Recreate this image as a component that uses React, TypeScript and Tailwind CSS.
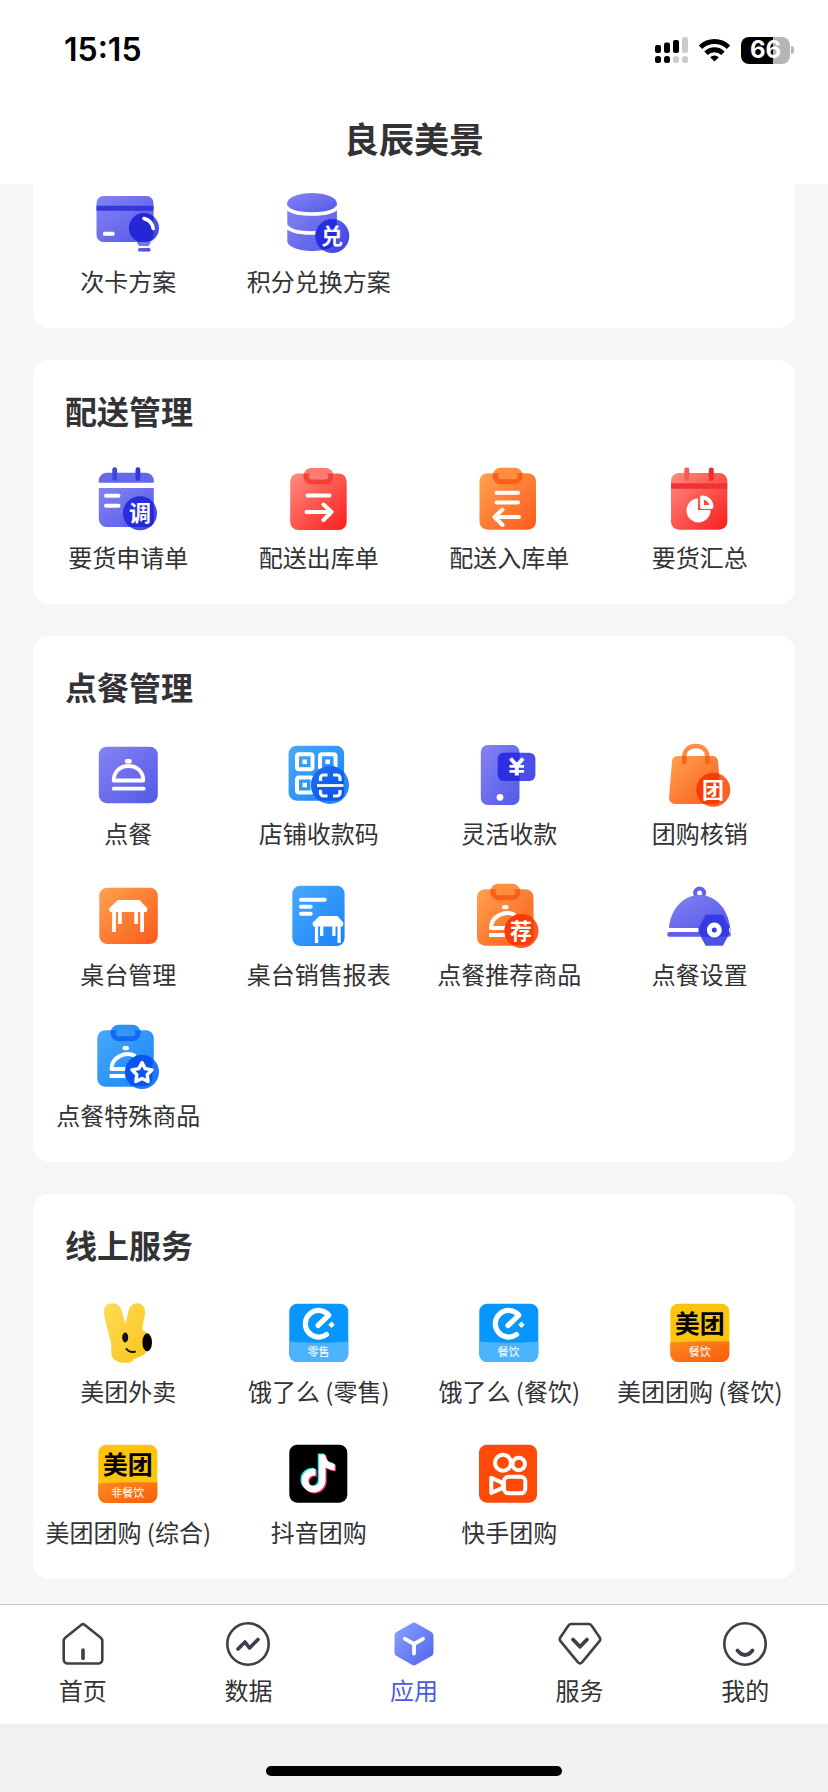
import type { ReactNode } from "react";

type AppItem = {
  name: string;
  icon: ReactNode;
};

type TabItem = {
  name: string;
  icon: ReactNode;
  active?: boolean;
};

function Icon({ children }: { children: ReactNode }) {
  return (
    <svg width="64" height="64" viewBox="0 0 64 64" className="overflow-visible" aria-hidden="true">
      {children}
    </svg>
  );
}

// Shared gradients, referenced by id from every icon
function Gradients() {
  const stops = [
    ["purple", "#8583f3", "#5359e8"],
    ["indigo", "#6a6cf0", "#3a40e2"],
    ["deep", "#2b2fe6", "#2226cf"],
    ["red", "#ff8d80", "#fb1d1d"],
    ["orange", "#ffa24f", "#fb5a1c"],
    ["blue", "#47aafa", "#1a82f8"],
    ["blueDeep", "#1b74f5", "#0a4be6"],
    ["tab", "#8ba2fd", "#4f62f0"],
    ["strip", "#fb8a1e", "#fb5b0e"],
    ["rabbit", "#fbdc55", "#fcc419"],
  ];
  return (
    <svg width="0" height="0" className="absolute" aria-hidden="true">
      <defs>
        {stops.map(([id, from, to]) => (
          <linearGradient key={id} id={id} x1="0" y1="0" x2="1" y2="1">
            <stop offset="0" stopColor={from} />
            <stop offset="1" stopColor={to} />
          </linearGradient>
        ))}
      </defs>
    </svg>
  );
}

function BadgeText({ x, y, children }: { x: number; y: number; children: string }) {
  return (
    <text x={x} y={y} textAnchor="middle" className="fill-white text-[22px] font-bold">
      {children}
    </text>
  );
}

type ClipboardProps = {
  id: string;
  x: number;
  y: number;
  fill: string;
  light: string;
  dark: string;
  inner: string;
};

// Board with a clip on top, the clip is darker where it covers the board
function Clipboard({ id, x, y, fill, light, dark, inner }: ClipboardProps) {
  return (
    <g transform={`translate(${x} ${y})`}>
      <clipPath id={id}>
        <rect x="0" y="5.500" width="56.500" height="56.500" rx="8" />
      </clipPath>
      <rect x="0" y="5.500" width="56.500" height="56.500" rx="8" fill={fill} />
      <rect x="13.300" y="0" width="30" height="16.500" rx="8" fill={light} />
      <rect x="13.300" y="0" width="30" height="16.500" rx="8" fill={dark} clipPath={`url(#${id})`} />
      <rect x="18.500" y="5" width="19.500" height="6.500" rx="3" fill={inner} />
    </g>
  );
}

function PlanCardIcon() {
  return (
    <Icon>
      <clipPath id="planCard">
        <rect x="0.500" y="6" width="57" height="46" rx="7" />
      </clipPath>
      <rect x="0.500" y="6" width="57" height="46" rx="7" fill="url(#purple)" />
      <path d="M0.500 15.700h57v5h-57z" fill="#3437dc" />
      <rect x="7" y="41.700" width="11.500" height="4" rx="1.500" fill="#fff" />
      <g fill="url(#indigo)">
        <circle cx="48" cy="38" r="15" />
        <path d="M41 50h13.500v3l-2 3h-9.500l-2-3z" fill="#7476f0" />
        <rect x="42" y="58" width="12.500" height="3.500" rx="1.500" />
      </g>
      <g clipPath="url(#planCard)" fill="#2427d6">
        <circle cx="48" cy="38" r="15" />
      </g>
      <path d="M48 28.500q8 2 9.200 10" fill="none" stroke="#fff" strokeWidth="3.600" strokeLinecap="round" />
    </Icon>
  );
}

function CoinsIcon() {
  return (
    <Icon>
      <clipPath id="coins">
        <path d="M0.300 13v38c0 5.500 11 10 24.800 10s24.800-4.500 24.800-10v-38z" />
      </clipPath>
      <path d="M0.300 13v38c0 5.500 11 10 24.800 10s24.800-4.500 24.800-10v-38z" fill="url(#purple)" />
      <ellipse cx="25" cy="13" rx="24.800" ry="10" fill="url(#purple)" />
      <path
        d="M-1 16.500c3 5 13 7.500 26 7.500s23-2.500 26-7.500M-1 35.500c3 5 13 7.500 26 7.500s23-2.500 26-7.500"
        fill="none"
        stroke="#fff"
        strokeWidth="3.600"
      />
      <circle cx="45.300" cy="46" r="17" fill="url(#indigo)" />
      <circle cx="45.300" cy="46" r="17" fill="url(#deep)" clipPath="url(#coins)" />
      <BadgeText x={45} y={54}>兑</BadgeText>
    </Icon>
  );
}

function RequestIcon() {
  return (
    <Icon>
      <clipPath id="request">
        <rect x="2.800" y="6.700" width="55" height="54.300" rx="6" />
      </clipPath>
      <path d="M10.800 6.700h39a8 8 0 0 1 8 8v2h-55v-2a8 8 0 0 1 8-8z" fill="#6668ec" />
      <path d="M2.800 22h55v31a8 8 0 0 1-8 8h-39a8 8 0 0 1-8-8z" fill="url(#purple)" />
      <rect x="16.300" y="1.300" width="4.800" height="13.500" rx="2.300" fill="#4045e0" />
      <rect x="39.500" y="1.300" width="4.800" height="13.500" rx="2.300" fill="#3035de" />
      <rect x="8" y="27.700" width="16.500" height="4" rx="2" fill="#fff" />
      <rect x="8" y="37.700" width="16.500" height="4" rx="2" fill="#fff" />
      <circle cx="44" cy="47.300" r="17" fill="url(#indigo)" />
      <circle cx="44" cy="47.300" r="17" fill="url(#deep)" clipPath="url(#request)" />
      <BadgeText x={44} y={55}>调</BadgeText>
    </Icon>
  );
}

function DeliveryOutIcon() {
  return (
    <Icon>
      <Clipboard id="deliveryOut" x={3.2} y={2} fill="url(#red)" light="#fd7a70" dark="#f8403a" inner="#ff7c72" />
      <g fill="none" stroke="#fff" strokeWidth="4" strokeLinecap="round" strokeLinejoin="round">
        <path d="M20.500 29.500h22" />
        <path d="M19.500 46h24M36.500 38.500l8 7.500-8 8" />
      </g>
    </Icon>
  );
}

function DeliveryInIcon() {
  return (
    <Icon>
      <Clipboard id="deliveryIn" x={2.5} y={1.7} fill="url(#orange)" light="#fd8f42" dark="#fa5f16" inner="#ff8c3e" />
      <g fill="none" stroke="#fff" strokeWidth="4" strokeLinecap="round" strokeLinejoin="round">
        <path d="M19.500 26.700h21.500M19.500 36.500h21.500" />
        <path d="M42 51h-23M25.500 43.500l-8 7.500 8 8" />
      </g>
    </Icon>
  );
}

function SummaryIcon() {
  return (
    <Icon>
      <rect x="3" y="7" width="56.300" height="56.700" rx="8" fill="url(#red)" />
      <path d="M3 17.300h56.300v5.400h-56.300z" fill="#f03434" />
      <rect x="16.300" y="1.500" width="5" height="13.500" rx="2.300" fill="#fb5a54" />
      <rect x="40.800" y="1.500" width="5" height="13.500" rx="2.300" fill="#f52b2b" />
      <path d="M30 32.500v11.500h12.500a12 12 0 1 1-12.500-11.500z" fill="#fff" />
      <path d="M34 31.500c5.500 0 9.500 4 9.500 9.500h-9.500z" fill="none" stroke="#fff" strokeWidth="3.800" strokeLinejoin="round" />
    </Icon>
  );
}

function OrderIcon() {
  return (
    <Icon>
      <rect x="2.800" y="4.700" width="59" height="56.500" rx="8" fill="url(#purple)" />
      <rect x="28.800" y="17" width="7" height="4.500" rx="2" fill="#fff" />
      <g fill="none" stroke="#fff" strokeWidth="3.800" strokeLinecap="round" strokeLinejoin="round">
        <path d="M17.700 38.500c0-9 6.500-14.500 14.800-14.500s14.800 5.500 14.800 14.500z" />
        <path d="M17.700 46.700h30" />
      </g>
    </Icon>
  );
}

function ShopCodeIcon() {
  return (
    <Icon>
      <clipPath id="shopCode">
        <rect x="1.600" y="3.700" width="55.500" height="55" rx="8" />
      </clipPath>
      <rect x="1.600" y="3.700" width="55.500" height="55" rx="8" fill="url(#blue)" />
      <g fill="none" stroke="#fff" strokeWidth="4">
        <rect x="10" y="12.300" width="15.500" height="15" rx="2" />
        <rect x="33" y="12.300" width="15.500" height="15" rx="2" />
        <rect x="10" y="35.500" width="15.500" height="15" rx="2" />
      </g>
      <path d="M15.500 17.500h4.500v4.500h-4.500zM38.500 17.500h4.500v4.500h-4.500zM15.500 40.700h4.500v4.500h-4.500z" fill="#fff" />
      <circle cx="43" cy="43" r="19" fill="#2687f7" />
      <circle cx="43" cy="43" r="19" fill="url(#blueDeep)" clipPath="url(#shopCode)" />
      <g fill="none" stroke="#fff" strokeWidth="3.200">
        <path d="M33.500 39v-3a3 3 0 0 1 3-3h4M46 33h4a3 3 0 0 1 3 3v3M33.500 48v3a3 3 0 0 0 3 3h4M46 54h4a3 3 0 0 0 3-3v-3" />
        <path d="M30 43.500h26.500" strokeWidth="2.800" />
      </g>
    </Icon>
  );
}

function PhonePayIcon() {
  return (
    <Icon>
      <clipPath id="phonePay">
        <rect x="3.800" y="3" width="38.700" height="60" rx="7" />
      </clipPath>
      <rect x="3.800" y="3" width="38.700" height="60" rx="7" fill="url(#purple)" />
      <rect x="20.800" y="10.700" width="37.600" height="28.300" rx="6" fill="#4a4ee8" />
      <rect x="20.800" y="10.700" width="37.600" height="28.300" rx="6" fill="#2c2fe2" clipPath="url(#phonePay)" />
      <g fill="none" stroke="#fff" strokeWidth="4">
        <path d="M33.500 16.500l6.300 7 6.300-7M39.800 23v10.500" />
        <path d="M32.500 24.300h14.600M32.500 29.300h14.600" strokeWidth="2.800" />
      </g>
      <circle cx="23" cy="55.300" r="3.400" fill="#fff" />
    </Icon>
  );
}

function BagIcon() {
  return (
    <Icon>
      <clipPath id="bag">
        <path d="M10 14h34a6 6 0 0 1 6 5l3 37a6 6 0 0 1-6 6h-40a6 6 0 0 1-6-6l3-37a6 6 0 0 1 6-5z" />
      </clipPath>
      <path d="M10 14h34a6 6 0 0 1 6 5l3 37a6 6 0 0 1-6 6h-40a6 6 0 0 1-6-6l3-37a6 6 0 0 1 6-5z" fill="url(#orange)" />
      <path d="M16.300 20v-5.500c0-14 23-14 23 0v5.500" fill="none" stroke="#fc8a48" strokeWidth="4.500" strokeLinecap="round" />
      <path
        d="M16.300 20v-5.500c0-14 23-14 23 0v5.500"
        fill="none"
        stroke="#f4661d"
        strokeWidth="4.500"
        strokeLinecap="round"
        clipPath="url(#bag)"
      />
      <circle cx="45.300" cy="47.700" r="17" fill="#fb6028" />
      <circle cx="45.300" cy="47.700" r="17" fill="#f83c08" clipPath="url(#bag)" />
      <BadgeText x={45} y={56}>团</BadgeText>
    </Icon>
  );
}

function TableIcon() {
  return (
    <Icon>
      <rect x="3.300" y="4.700" width="58.500" height="56.300" rx="8" fill="url(#orange)" />
      <path
        d="M22 17h21.500l8 8.500-1 3.500h-2.500v20h-3.800v-20h-2.200v12h-3.700v-12h-12.500v12h-3.700v-12h-2.200v20h-3.800v-20h-2l-1.200-3.500z"
        fill="#fff"
      />
    </Icon>
  );
}

function TableReportIcon() {
  return (
    <Icon>
      <rect x="5.300" y="2.700" width="52.300" height="60.300" rx="8" fill="url(#blue)" />
      <g stroke="#fff" strokeWidth="4" strokeLinecap="round">
        <path d="M14 16.700h23.700M14 23.700h9.700M14 30.700h9.700" />
      </g>
      <path
        d="M32.500 33h18l6 7-.8 3.500h-2v16.500h-3.200v-16.500h-2v9.500h-3.200v-9.500h-9v9.500h-3.200v-9.500h-2v16.500h-3.200v-16.500h-1.500l-1-3.500z"
        fill="#fff"
      />
    </Icon>
  );
}

function RecommendIcon() {
  return (
    <Icon>
      <Clipboard id="recommend" x={0} y={0.7} fill="url(#orange)" light="#fd8f42" dark="#fa5f16" inner="#ff8c3e" />
      <rect x="25" y="22" width="6.500" height="4.300" rx="2" fill="#fff" />
      <g fill="none" stroke="#fff" strokeWidth="4">
        <path d="M38 32c-10-5-24 1-24 13h17" strokeLinejoin="round" />
        <path d="M12 52h16" />
      </g>
      <circle cx="44.500" cy="48" r="17" fill="#fb5a24" />
      <circle cx="44.500" cy="48" r="17" fill="#f83c08" clipPath="url(#recommend)" />
      <BadgeText x={44} y={56}>荐</BadgeText>
    </Icon>
  );
}

function OrderSettingIcon() {
  return (
    <Icon>
      <clipPath id="orderSetting">
        <path d="M1.500 41c3-17 15-29 30-29s27 12 30 29l1 3v9.700h-61.500z" />
      </clipPath>
      <circle cx="31.600" cy="10" r="4.500" fill="none" stroke="#5f62ea" strokeWidth="4" />
      <path d="M1.500 41c3-17 15-29 30-29s27 12 30 29q1.500 2.500 0 4h-60q-1.500-1.500 0-4z" fill="url(#purple)" />
      <rect x="-0.700" y="49" width="63.500" height="4.700" rx="2" fill="#5d60ea" />
      <path d="M38 32h16.500l8 15-8 15h-16.500l-8-15z" fill="#4f52e8" stroke="#4f52e8" strokeWidth="1.500" strokeLinejoin="round" />
      <path d="M38 32h16.500l8 15-8 15h-16.500l-8-15z" fill="#373ae2" clipPath="url(#orderSetting)" />
      <path d="M0.500 47h30M61 47h1.500" stroke="#fff" strokeWidth="3.500" />
      <circle cx="46.300" cy="47" r="5" fill="none" stroke="#fff" strokeWidth="5" />
    </Icon>
  );
}

function SpecialIcon() {
  return (
    <Icon>
      <Clipboard id="special" x={1.3} y={0.7} fill="url(#blue)" light="#2f90f8" dark="#126af2" inner="#3595f8" />
      <rect x="26.500" y="22" width="6.500" height="4.300" rx="2" fill="#fff" />
      <g fill="none" stroke="#fff" strokeWidth="4">
        <path d="M39.500 32c-10-5-24 1-24 13h17" strokeLinejoin="round" />
        <path d="M13.500 52h16" />
      </g>
      <circle cx="46" cy="48" r="17" fill="#1d78f6" />
      <circle cx="46" cy="48" r="17" fill="#0b55ee" clipPath="url(#special)" />
      <path
        d="M46 38.500l3.200 6.100 6.800 1.200-4.800 4.900.9 6.800-6.100-3-6.100 3 .9-6.800-4.800-4.900 6.800-1.200z"
        fill="none"
        stroke="#fff"
        strokeWidth="3.400"
        strokeLinejoin="round"
      />
    </Icon>
  );
}

function RabbitIcon() {
  return (
    <Icon>
      <path
        d="M8 13C7 6 12 3.300 16.500 3.200C22 3 25 7 26 12L29.500 24L32 13C33 6 37 3 41.500 3.200C46.500 3.500 49.500 8 49 13C48.500 20 46 25 46.500 30C52 32 55 38 54.500 43C54 51 47 57 37.500 59C37.500 62 34 62.800 28 62.800C20 62.500 16 58.500 15.500 55L15 43C13 33 9 22 8 13Z"
        fill="url(#rabbit)"
      />
      <ellipse cx="29.200" cy="37.500" rx="3" ry="5" fill="#111" />
      <ellipse cx="51.200" cy="42.300" rx="4.800" ry="9" fill="#000" />
      <path d="M30.500 49q3 4 8.500 2.700" fill="none" stroke="#111" strokeWidth="2" strokeLinecap="round" />
    </Icon>
  );
}

function ElemeIcon({ label }: { label: string }) {
  return (
    <Icon>
      <rect x="2.300" y="3.700" width="59" height="58.300" rx="8" fill="#0796fd" />
      <path d="M2.300 41.500q29.500 2.500 59 0v12.500a8 8 0 0 1-8 8h-43a8 8 0 0 1-8-8z" fill="#4cb4fd" />
      <path
        d="M31 25.500L41.800 15.200A13.300 13.300 0 1 0 39.500 34.500"
        fill="none"
        stroke="#fff"
        strokeWidth="5.200"
        strokeLinecap="round"
        strokeLinejoin="round"
      />
      <path d="M44.500 21.600l3.200 3.200-3.200 3.200-3.200-3.200z" fill="#fff" />
      <text x="31.500" y="56" textAnchor="middle" className="fill-white text-[11px]">
        {label}
      </text>
    </Icon>
  );
}

function MeituanIcon({ label }: { label: string }) {
  return (
    <Icon>
      <rect x="2.300" y="3.700" width="59" height="58.300" rx="8" fill="#fdc40c" />
      <path d="M2.300 42.500q29.500-2 59-1v12.500a8 8 0 0 1-8 8h-43a8 8 0 0 1-8-8z" fill="url(#strip)" />
      <text x="31.700" y="33" textAnchor="middle" className="fill-black text-[25px] font-bold">
        美团
      </text>
      <text x="31.700" y="56" textAnchor="middle" className="fill-white text-[11px]">
        {label}
      </text>
    </Icon>
  );
}

const notePath =
  "M12.525.02c1.31-.02 2.61-.01 3.91-.02.08 1.53.63 3.09 1.75 4.17 1.12 1.11 2.7 1.62 4.24 1.79v4.03c-1.44-.05-2.89-.35-4.2-.97-.57-.26-1.1-.59-1.62-.93-.01 2.92.01 5.84-.02 8.75-.08 1.4-.54 2.79-1.35 3.94-1.31 1.92-3.58 3.17-5.91 3.21-1.43.08-2.86-.31-4.08-1.03-2.02-1.19-3.44-3.37-3.65-5.71-.02-.5-.03-1-.01-1.49.18-1.9 1.12-3.72 2.58-4.96 1.66-1.44 3.98-2.13 6.15-1.72.02 1.48-.04 2.96-.04 4.44-.99-.32-2.15-.23-3.02.37-.63.41-1.11 1.04-1.36 1.75-.21.51-.15 1.07-.14 1.61.24 1.64 1.82 3.02 3.5 2.87 1.12-.01 2.19-.66 2.77-1.61.19-.33.4-.67.41-1.06.1-1.79.06-3.57.07-5.36.01-4.03-.01-8.05.02-12.07z";

function DouyinIcon() {
  return (
    <Icon>
      <rect x="2.300" y="3.700" width="58" height="58" rx="8" fill="#000" />
      <path d={notePath} fill="#27ece4" transform="translate(11 12.500) scale(1.580)" />
      <path d={notePath} fill="#fb2e57" transform="translate(13.500 14.500) scale(1.580)" />
      <path d={notePath} fill="#fff" transform="translate(12.300 13.500) scale(1.580)" />
    </Icon>
  );
}

function KuaishouIcon() {
  return (
    <Icon>
      <rect x="2" y="3.700" width="58" height="58" rx="8" fill="#fe4a08" />
      <g fill="none" stroke="#fff" strokeWidth="4" strokeLinejoin="round">
        <circle cx="26" cy="21.700" r="8" />
        <circle cx="41.700" cy="23" r="6.300" />
        <rect x="27" y="35.800" width="21.300" height="16.500" rx="4.500" />
        <path d="M14.300 36.800l11.500 5v5l-11.500 5z" />
      </g>
    </Icon>
  );
}

function TabIcon({ children }: { children: ReactNode }) {
  return (
    <svg
      width="44"
      height="44"
      viewBox="0 0 44 44"
      fill="none"
      stroke="#3f3f4a"
      strokeWidth="2.600"
      strokeLinecap="round"
      strokeLinejoin="round"
      aria-hidden="true"
    >
      {children}
    </svg>
  );
}

const sections: { title?: string; items: AppItem[] }[] = [
  {
    items: [
      { name: "次卡方案", icon: <PlanCardIcon /> },
      { name: "积分兑换方案", icon: <CoinsIcon /> },
    ],
  },
  {
    title: "配送管理",
    items: [
      { name: "要货申请单", icon: <RequestIcon /> },
      { name: "配送出库单", icon: <DeliveryOutIcon /> },
      { name: "配送入库单", icon: <DeliveryInIcon /> },
      { name: "要货汇总", icon: <SummaryIcon /> },
    ],
  },
  {
    title: "点餐管理",
    items: [
      { name: "点餐", icon: <OrderIcon /> },
      { name: "店铺收款码", icon: <ShopCodeIcon /> },
      { name: "灵活收款", icon: <PhonePayIcon /> },
      { name: "团购核销", icon: <BagIcon /> },
      { name: "桌台管理", icon: <TableIcon /> },
      { name: "桌台销售报表", icon: <TableReportIcon /> },
      { name: "点餐推荐商品", icon: <RecommendIcon /> },
      { name: "点餐设置", icon: <OrderSettingIcon /> },
      { name: "点餐特殊商品", icon: <SpecialIcon /> },
    ],
  },
  {
    title: "线上服务",
    items: [
      { name: "美团外卖", icon: <RabbitIcon /> },
      { name: "饿了么 (零售)", icon: <ElemeIcon label="零售" /> },
      { name: "饿了么 (餐饮)", icon: <ElemeIcon label="餐饮" /> },
      { name: "美团团购 (餐饮)", icon: <MeituanIcon label="餐饮" /> },
      { name: "美团团购 (综合)", icon: <MeituanIcon label="非餐饮" /> },
      { name: "抖音团购", icon: <DouyinIcon /> },
      { name: "快手团购", icon: <KuaishouIcon /> },
    ],
  },
];

const tabs: TabItem[] = [
  {
    name: "首页",
    icon: (
      <TabIcon>
        <path d="M20.500 2.800q1.500-1.200 3 0L39.500 15.500q1.800 1.500 1.800 3.500v18.500a4 4 0 0 1-4 4h-30.600a4 4 0 0 1-4-4v-18.500q0-2 1.800-3.500z" />
        <path d="M22 28v8.500" strokeWidth="3.600" />
      </TabIcon>
    ),
  },
  {
    name: "数据",
    icon: (
      <TabIcon>
        <circle cx="22" cy="22" r="20.700" />
        <path d="M12 27l7-7 4.500 6 8.500-8.500" strokeWidth="3.600" />
      </TabIcon>
    ),
  },
  {
    name: "应用",
    active: true,
    icon: (
      <TabIcon>
        <path
          d="M20 1.200q2-1.200 4 0L39.500 10q2 1.200 2 3.500v17q0 2.300-2 3.500L24 42.800q-2 1.200-4 0L4.500 34q-2-1.200-2-3.500v-17q0-2.300 2-3.500z"
          fill="url(#tab)"
          stroke="none"
        />
        <path d="M13 16.800l9 5.200 9-5.200M22 22.500v9" stroke="#fff" strokeWidth="3.800" />
      </TabIcon>
    ),
  },
  {
    name: "服务",
    icon: (
      <TabIcon>
        <path d="M13.500 2h17q2 0 3.200 1.700l8 11.800q1.200 1.800-.2 3.700L24 40.300q-2 2-4 0L2.500 19.200q-1.400-1.900-.2-3.700l8-11.800Q11.500 2 13.500 2z" />
        <path d="M15 17.500l7 7.300 7-7.300" strokeWidth="3.800" />
      </TabIcon>
    ),
  },
  {
    name: "我的",
    icon: (
      <TabIcon>
        <circle cx="22" cy="22" r="20.700" />
        <path d="M14.500 28.500q7.500 9 15 0" strokeWidth="3.800" />
      </TabIcon>
    ),
  },
];

function StatusBar() {
  return (
    <div className="flex h-[100px] items-center justify-between pr-[34px] pl-16 text-black">
      <div className="font-['Inter'] text-[32px] font-semibold">15:15</div>
      <div className="flex items-center gap-[11px]">
        <svg width="33" height="26" viewBox="0 0 33 26" aria-hidden="true">
          <g fill="#000">
            <rect x="0" y="8" width="6" height="8" rx="2" />
            <rect x="9" y="5.500" width="6" height="10.500" rx="2" />
            <rect x="18" y="3" width="6" height="13" rx="2" />
            <rect x="0" y="19" width="6" height="7" rx="2.500" />
            <rect x="9" y="19" width="6" height="7" rx="2.500" />
          </g>
          <g fill="#ccc">
            <rect x="27" y="0" width="6" height="16" rx="2" />
            <rect x="18" y="19" width="6" height="7" rx="2.500" />
            <rect x="27" y="19" width="6" height="7" rx="2.500" />
          </g>
        </svg>
        <svg width="31" height="24" viewBox="0 0 31 24" aria-hidden="true">
          <g fill="none" stroke="#000" strokeWidth="4.800">
            <path d="M1.500 9.200a20 20 0 0 1 28 0" />
            <path d="M7 15.300a12 12 0 0 1 17 0" />
          </g>
          <path d="M15.500 23.500l-4.300-4.300a6 6 0 0 1 8.600 0z" fill="#000" />
        </svg>
        <div className="flex items-center gap-px">
          <div className="flex h-[27px] w-[49px] items-center justify-center rounded-[8px] bg-linear-to-r from-black from-66% to-[#b5b5b5] to-66% font-['Inter'] text-[24px] font-bold text-white">
            66
          </div>
          <div className="h-[8px] w-[3px] rounded-r-full bg-[#b5b5b5]" />
        </div>
      </div>
    </div>
  );
}

export default function App() {
  return (
    <div className="flex min-h-screen flex-col bg-[#f6f6f9] font-['Noto_Sans_CJK_SC',sans-serif] text-[#333336]">
      <Gradients />

      {/* Header */}
      <header className="bg-white pb-2">
        <StatusBar />
        <h1 className="text-center text-[35px] leading-[76px] font-bold">良辰美景</h1>
      </header>

      {/* App sections */}
      <main className="flex flex-1 flex-col gap-8 px-[33px] pb-[25px]">
        {sections.map((section, index) => (
          <section
            key={index}
            className={`bg-white pb-[31px] ${section.title ? "rounded-[16px] pt-[30px]" : "rounded-b-[16px] pt-[6px]"}`}
          >
            {section.title && (
              <h2 className="mb-9 px-8 text-[32px] leading-10 font-bold">{section.title}</h2>
            )}
            <div className="grid grid-cols-4 gap-y-[34px]">
              {section.items.map((item) => (
                <button key={item.name} type="button" className="flex flex-col items-center gap-[11px]">
                  {item.icon}
                  <span className="text-[24px] leading-8 whitespace-nowrap">{item.name}</span>
                </button>
              ))}
            </div>
          </section>
        ))}
      </main>

      {/* Tab bar */}
      <nav className="grid grid-cols-5 border-t border-[#c9c9cc] bg-white pt-[17px] pb-[18px]">
        {tabs.map((tab) => (
          <button
            key={tab.name}
            type="button"
            className={`flex flex-col items-center gap-2 ${tab.active ? "text-[#4a5be0]" : ""}`}
          >
            {tab.icon}
            <span className="text-[24px] leading-8">{tab.name}</span>
          </button>
        ))}
      </nav>

      {/* Home indicator */}
      <footer className="flex h-[68px] justify-center bg-[#f1f1f1] pt-[42px]">
        <div className="h-[10px] w-[296px] rounded-full bg-black" />
      </footer>
    </div>
  );
}
